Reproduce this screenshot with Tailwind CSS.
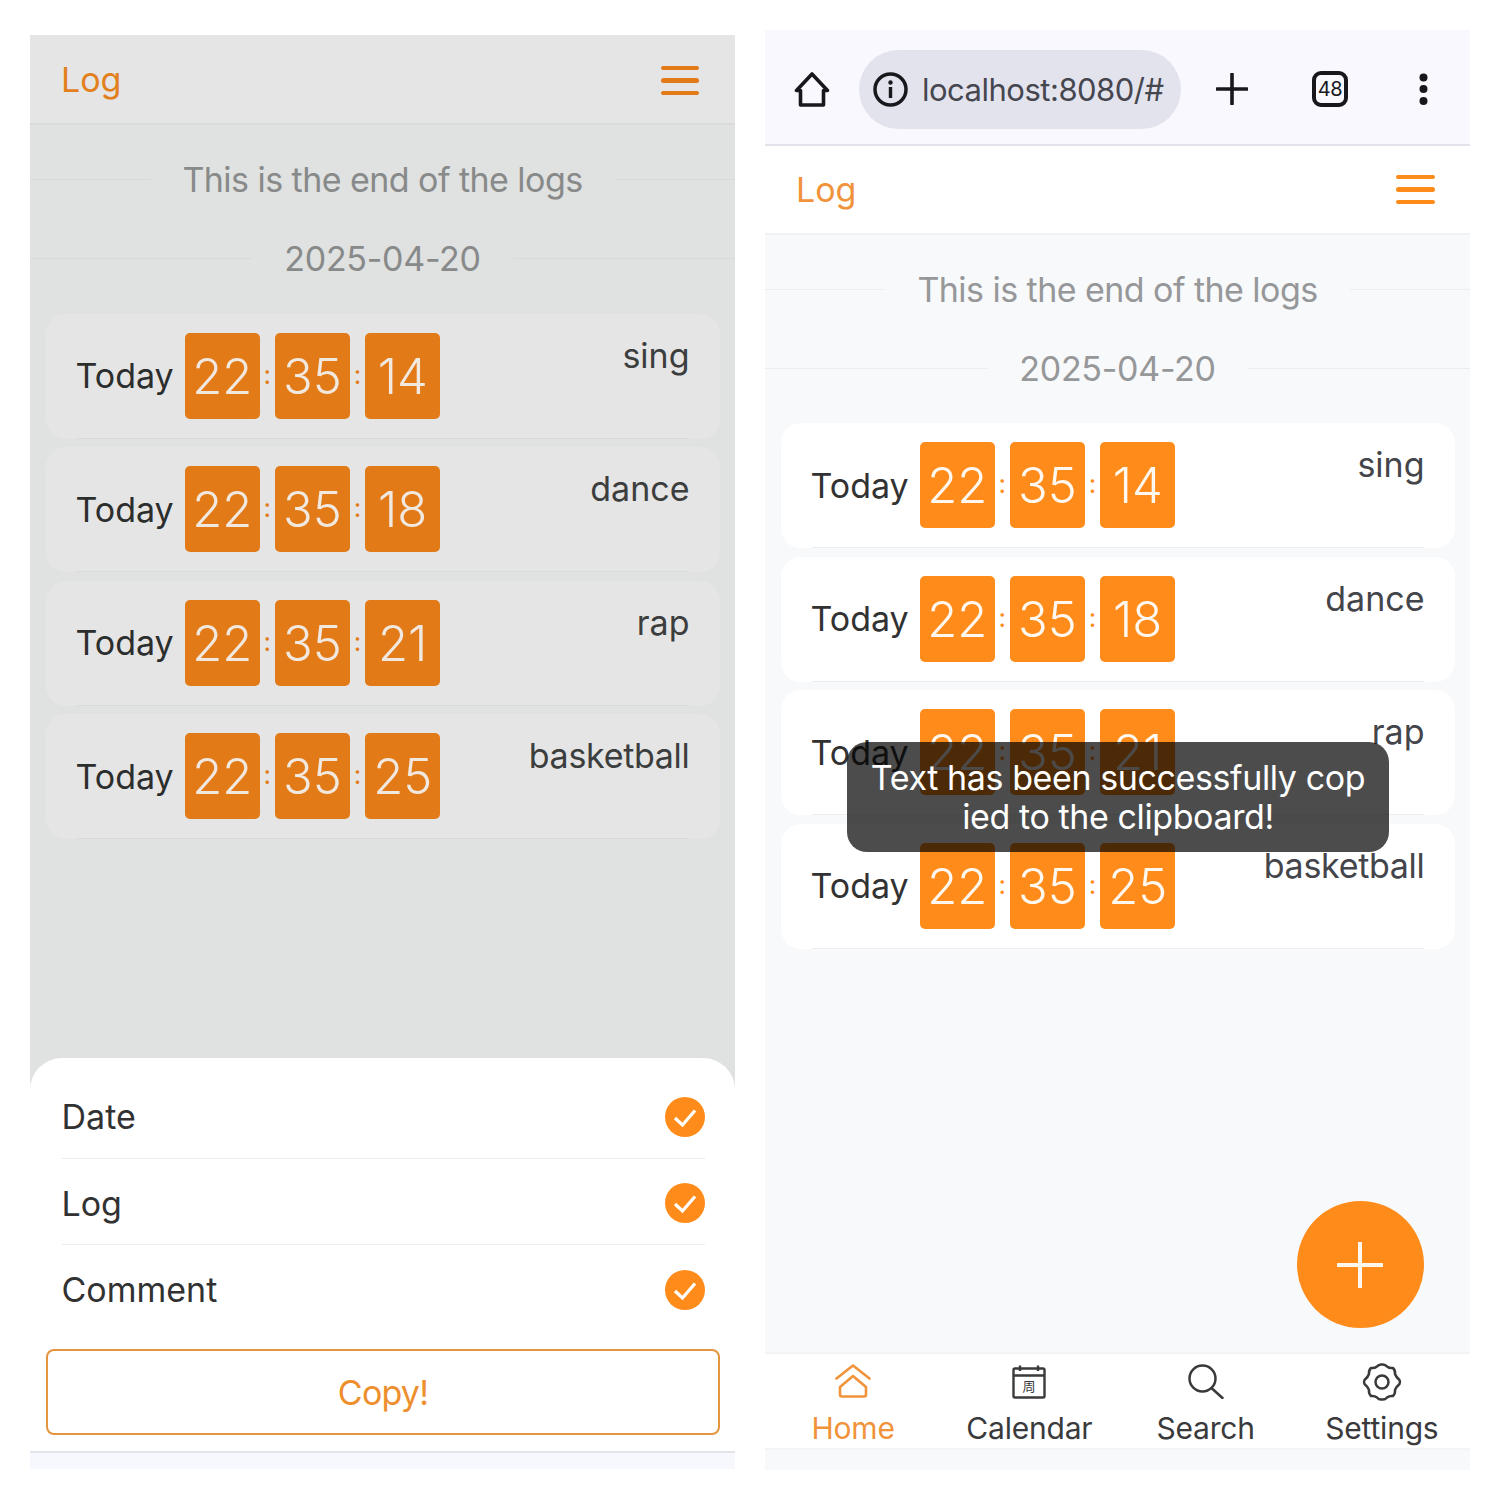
<!doctype html>
<html><head><meta charset="utf-8"><script src="https://cdn.jsdelivr.net/npm/@tailwindcss/browser@4"></script></head>
<body class="bg-white [font-family:Inter,sans-serif]">
<div class="flex w-[1500px] h-[1500px] pl-[30px] pt-[30px] gap-[30px] items-start">

<!-- LEFT PANEL -->
<div class="mt-[5px] w-[705px] h-[1434px] flex flex-col bg-[#e0e1e1]">
  <div class="h-[90px] shrink-0 bg-[#e5e5e5] border-b-2 border-[#d9dada] flex items-center justify-between pl-[31px] pr-[36px]">
    <span class="text-[34px] text-[#e2801e]">Log</span>
    <div class="flex flex-col gap-[8px] w-[38px] mt-[3px]"><div class="h-[4.5px] rounded-full bg-[#e27a17]"></div><div class="h-[4.5px] rounded-full bg-[#e27a17]"></div><div class="h-[4.5px] rounded-full bg-[#e27a17]"></div></div>
  </div>
  <div class="flex-1 pt-[15px]">
    <div class="h-[79px] flex items-center gap-[32px] text-[34px] tracking-[-0.55px] text-[#888a8a]"><div class="flex-1 h-px bg-[#d8d9d9]"></div><span>This is the end of the logs</span><div class="flex-1 h-px bg-[#d8d9d9]"></div></div>
    <div class="h-[79px] flex items-center gap-[32px] text-[34px] tracking-[-0.3px] text-[#888a8a]"><div class="flex-1 h-px bg-[#d8d9d9]"></div><span>2025-04-20</span><div class="flex-1 h-px bg-[#d8d9d9]"></div></div>
    <div class="mt-[15.5px] px-[15.5px] flex flex-col gap-[8.5px]">
      <div class="relative h-[125px] rounded-[20px] bg-[#e5e5e5] flex items-center pl-[30px] pr-[30px]"><span class="text-[34px] text-[#2c2d2d] mr-[11px] -mt-[1px]">Today</span><div class="w-[75px] h-[86px] -mt-[1px] rounded-[5px] bg-[#e27a17] text-[#f1e8df] text-[49px] font-[350] pt-[2px] flex items-center justify-center">22</div><span class="w-[15.25px] text-center text-[26px] text-[#e27a17] -mt-[4px]">:</span><div class="w-[75px] h-[86px] -mt-[1px] rounded-[5px] bg-[#e27a17] text-[#f1e8df] text-[49px] font-[350] pt-[2px] flex items-center justify-center">35</div><span class="w-[15.25px] text-center text-[26px] text-[#e27a17] -mt-[4px]">:</span><div class="w-[75px] h-[86px] -mt-[1px] rounded-[5px] bg-[#e27a17] text-[#f1e8df] text-[49px] font-[350] pt-[2px] flex items-center justify-center">14</div><span class="ml-auto self-start mt-[16px] text-[34px] text-[#3c3d3d]">sing</span><div class="absolute left-[31px] right-[31px] bottom-0 h-px bg-[#d8d9d9]"></div></div>
      <div class="relative h-[125px] rounded-[20px] bg-[#e5e5e5] flex items-center pl-[30px] pr-[30px]"><span class="text-[34px] text-[#2c2d2d] mr-[11px] -mt-[1px]">Today</span><div class="w-[75px] h-[86px] -mt-[1px] rounded-[5px] bg-[#e27a17] text-[#f1e8df] text-[49px] font-[350] pt-[2px] flex items-center justify-center">22</div><span class="w-[15.25px] text-center text-[26px] text-[#e27a17] -mt-[4px]">:</span><div class="w-[75px] h-[86px] -mt-[1px] rounded-[5px] bg-[#e27a17] text-[#f1e8df] text-[49px] font-[350] pt-[2px] flex items-center justify-center">35</div><span class="w-[15.25px] text-center text-[26px] text-[#e27a17] -mt-[4px]">:</span><div class="w-[75px] h-[86px] -mt-[1px] rounded-[5px] bg-[#e27a17] text-[#f1e8df] text-[49px] font-[350] pt-[2px] flex items-center justify-center">18</div><span class="ml-auto self-start mt-[16px] text-[34px] text-[#3c3d3d]">dance</span><div class="absolute left-[31px] right-[31px] bottom-0 h-px bg-[#d8d9d9]"></div></div>
      <div class="relative h-[125px] rounded-[20px] bg-[#e5e5e5] flex items-center pl-[30px] pr-[30px]"><span class="text-[34px] text-[#2c2d2d] mr-[11px] -mt-[1px]">Today</span><div class="w-[75px] h-[86px] -mt-[1px] rounded-[5px] bg-[#e27a17] text-[#f1e8df] text-[49px] font-[350] pt-[2px] flex items-center justify-center">22</div><span class="w-[15.25px] text-center text-[26px] text-[#e27a17] -mt-[4px]">:</span><div class="w-[75px] h-[86px] -mt-[1px] rounded-[5px] bg-[#e27a17] text-[#f1e8df] text-[49px] font-[350] pt-[2px] flex items-center justify-center">35</div><span class="w-[15.25px] text-center text-[26px] text-[#e27a17] -mt-[4px]">:</span><div class="w-[75px] h-[86px] -mt-[1px] rounded-[5px] bg-[#e27a17] text-[#f1e8df] text-[49px] font-[350] pt-[2px] flex items-center justify-center">21</div><span class="ml-auto self-start mt-[16px] text-[34px] text-[#3c3d3d]">rap</span><div class="absolute left-[31px] right-[31px] bottom-0 h-px bg-[#d8d9d9]"></div></div>
      <div class="relative h-[125px] rounded-[20px] bg-[#e5e5e5] flex items-center pl-[30px] pr-[30px]"><span class="text-[34px] text-[#2c2d2d] mr-[11px] -mt-[1px]">Today</span><div class="w-[75px] h-[86px] -mt-[1px] rounded-[5px] bg-[#e27a17] text-[#f1e8df] text-[49px] font-[350] pt-[2px] flex items-center justify-center">22</div><span class="w-[15.25px] text-center text-[26px] text-[#e27a17] -mt-[4px]">:</span><div class="w-[75px] h-[86px] -mt-[1px] rounded-[5px] bg-[#e27a17] text-[#f1e8df] text-[49px] font-[350] pt-[2px] flex items-center justify-center">35</div><span class="w-[15.25px] text-center text-[26px] text-[#e27a17] -mt-[4px]">:</span><div class="w-[75px] h-[86px] -mt-[1px] rounded-[5px] bg-[#e27a17] text-[#f1e8df] text-[49px] font-[350] pt-[2px] flex items-center justify-center">25</div><span class="ml-auto self-start mt-[16px] text-[34px] text-[#3c3d3d] tracking-[-0.3px]">basketball</span><div class="absolute left-[31px] right-[31px] bottom-0 h-px bg-[#d8d9d9]"></div></div>
    </div>
  </div>
  <!-- sheet -->
  <div class="shrink-0 h-[393px] bg-white rounded-t-[32px] pt-[15px] flex flex-col">
    <div class="ml-[31.5px] mr-[30px] h-[86px] pt-[2px] border-b border-[#ebedf0] flex items-center justify-between text-[34px] text-[#323233]"><span>Date</span><svg width="40" height="40" viewBox="0 0 40 40"><circle cx="20" cy="20" r="20" fill="#ff8c1a"/><path d="M10 21l7.500 7L30 13.500" fill="none" stroke="#fff" stroke-width="3.200"/></svg></div>
    <div class="ml-[31.5px] mr-[30px] h-[86px] pt-[3px] border-b border-[#ebedf0] flex items-center justify-between text-[34px] text-[#323233]"><span>Log</span><svg width="40" height="40" viewBox="0 0 40 40"><circle cx="20" cy="20" r="20" fill="#ff8c1a"/><path d="M10 21l7.500 7L30 13.500" fill="none" stroke="#fff" stroke-width="3.200"/></svg></div>
    <div class="ml-[31.5px] mr-[30px] h-[86px] pt-[3px] flex items-center justify-between text-[34px] text-[#323233]"><span>Comment</span><svg width="40" height="40" viewBox="0 0 40 40"><circle cx="20" cy="20" r="20" fill="#ff8c1a"/><path d="M10 21l7.500 7L30 13.500" fill="none" stroke="#fff" stroke-width="3.200"/></svg></div>
    <div class="ml-[16px] mr-[15px] mt-[18px] h-[86px] border-2 border-[#e5943f] rounded-[8px] flex items-center justify-center text-[34px] tracking-[-0.8px] text-[#ee8f2e]">Copy!</div>
  </div>
  <div class="shrink-0 h-[18px] bg-[#f7f8fd] border-t-2 border-[#e3e4e9]"></div>
</div>

<!-- RIGHT PANEL -->
<div class="relative w-[705px] h-[1440px] flex flex-col bg-[#f8f9fb]">
  <div class="h-[116px] shrink-0 bg-[#f8f8fe] border-b-2 border-[#e3e3ec] flex items-start">
    <svg class="ml-[29px] mt-[41px]" width="36" height="37" viewBox="0 0 36 37"><path d="M18 3L2.500 19.500H6.500V34H29.500V19.500H33.500Z" fill="none" stroke="#17171c" stroke-width="3.600" stroke-linejoin="round"/></svg>
    <div class="ml-[29px] mt-[20px] w-[322px] h-[79px] rounded-full bg-[#e3e3ee] flex items-center pl-[14px]">
      <svg width="35" height="35" viewBox="0 0 35 35"><circle cx="17.500" cy="17.500" r="15.500" fill="none" stroke="#17171c" stroke-width="3.500"/><circle cx="17.500" cy="10.500" r="2.200" fill="#17171c"/><rect x="15.800" y="15" width="3.400" height="11" fill="#17171c"/></svg>
      <span class="ml-[14px] mt-[1px] text-[31px] tracking-[-0.5px] text-[#46464f] whitespace-nowrap">localhost:8080/#</span>
    </div>
    <svg class="ml-[35px] mt-[43px]" width="32" height="32" viewBox="0 0 32 32"><path d="M16 1V31M1 16H31" stroke="#17171c" stroke-width="3.600" stroke-linecap="round"/></svg>
    <div class="ml-[64px] mt-[41px] w-[36px] h-[36px] rounded-[9px] border-[4px] border-[#17171c] flex items-center justify-center text-[20px] text-[#17171c] tracking-[-0.5px]">48</div>
    <svg class="ml-[71px] mt-[43px]" width="9" height="33" viewBox="0 0 9 33"><circle cx="4.500" cy="4.500" r="4" fill="#17171c"/><circle cx="4.500" cy="16" r="4" fill="#17171c"/><circle cx="4.500" cy="28" r="4" fill="#17171c"/></svg>
  </div>
  <div class="h-[89px] shrink-0 bg-white border-b-2 border-[#f0f1f4] flex items-center justify-between pl-[31px] pr-[35px]">
    <span class="text-[34px] text-[#f0933a]">Log</span>
    <div class="flex flex-col gap-[8px] w-[39px]"><div class="h-[4.5px] rounded-full bg-[#ff8c1a]"></div><div class="h-[4.5px] rounded-full bg-[#ff8c1a]"></div><div class="h-[4.5px] rounded-full bg-[#ff8c1a]"></div></div>
  </div>
  <div class="flex-1 pt-[15px]">
    <div class="h-[79px] flex items-center gap-[32px] text-[34px] tracking-[-0.55px] text-[#969799]"><div class="flex-1 h-px bg-[#ebedf0]"></div><span>This is the end of the logs</span><div class="flex-1 h-px bg-[#ebedf0]"></div></div>
    <div class="h-[79px] flex items-center gap-[32px] text-[34px] tracking-[-0.3px] text-[#969799]"><div class="flex-1 h-px bg-[#ebedf0]"></div><span>2025-04-20</span><div class="flex-1 h-px bg-[#ebedf0]"></div></div>
    <div class="mt-[15px] px-[15.5px] flex flex-col gap-[8.5px]">
      <div class="relative h-[125px] rounded-[20px] bg-white flex items-center pl-[30px] pr-[30px]"><span class="text-[34px] text-[#323233] mr-[11px] -mt-[1px]">Today</span><div class="w-[75px] h-[86px] -mt-[1px] rounded-[5px] bg-[#ff8c1a] text-[#fff8f0] text-[49px] font-[350] pt-[2px] flex items-center justify-center">22</div><span class="w-[15.25px] text-center text-[26px] text-[#ff8c1a] -mt-[4px]">:</span><div class="w-[75px] h-[86px] -mt-[1px] rounded-[5px] bg-[#ff8c1a] text-[#fff8f0] text-[49px] font-[350] pt-[2px] flex items-center justify-center">35</div><span class="w-[15.25px] text-center text-[26px] text-[#ff8c1a] -mt-[4px]">:</span><div class="w-[75px] h-[86px] -mt-[1px] rounded-[5px] bg-[#ff8c1a] text-[#fff8f0] text-[49px] font-[350] pt-[2px] flex items-center justify-center">14</div><span class="ml-auto self-start mt-[16px] text-[34px] text-[#44454a]">sing</span><div class="absolute left-[31px] right-[31px] bottom-0 h-px bg-[#ebedf0]"></div></div>
      <div class="relative h-[125px] rounded-[20px] bg-white flex items-center pl-[30px] pr-[30px]"><span class="text-[34px] text-[#323233] mr-[11px] -mt-[1px]">Today</span><div class="w-[75px] h-[86px] -mt-[1px] rounded-[5px] bg-[#ff8c1a] text-[#fff8f0] text-[49px] font-[350] pt-[2px] flex items-center justify-center">22</div><span class="w-[15.25px] text-center text-[26px] text-[#ff8c1a] -mt-[4px]">:</span><div class="w-[75px] h-[86px] -mt-[1px] rounded-[5px] bg-[#ff8c1a] text-[#fff8f0] text-[49px] font-[350] pt-[2px] flex items-center justify-center">35</div><span class="w-[15.25px] text-center text-[26px] text-[#ff8c1a] -mt-[4px]">:</span><div class="w-[75px] h-[86px] -mt-[1px] rounded-[5px] bg-[#ff8c1a] text-[#fff8f0] text-[49px] font-[350] pt-[2px] flex items-center justify-center">18</div><span class="ml-auto self-start mt-[16px] text-[34px] text-[#44454a]">dance</span><div class="absolute left-[31px] right-[31px] bottom-0 h-px bg-[#ebedf0]"></div></div>
      <div class="relative h-[125px] rounded-[20px] bg-white flex items-center pl-[30px] pr-[30px]"><span class="text-[34px] text-[#323233] mr-[11px] -mt-[1px]">Today</span><div class="w-[75px] h-[86px] -mt-[1px] rounded-[5px] bg-[#ff8c1a] text-[#fff8f0] text-[49px] font-[350] pt-[2px] flex items-center justify-center">22</div><span class="w-[15.25px] text-center text-[26px] text-[#ff8c1a] -mt-[4px]">:</span><div class="w-[75px] h-[86px] -mt-[1px] rounded-[5px] bg-[#ff8c1a] text-[#fff8f0] text-[49px] font-[350] pt-[2px] flex items-center justify-center">35</div><span class="w-[15.25px] text-center text-[26px] text-[#ff8c1a] -mt-[4px]">:</span><div class="w-[75px] h-[86px] -mt-[1px] rounded-[5px] bg-[#ff8c1a] text-[#fff8f0] text-[49px] font-[350] pt-[2px] flex items-center justify-center">21</div><span class="ml-auto self-start mt-[16px] text-[34px] text-[#44454a]">rap</span><div class="absolute left-[31px] right-[31px] bottom-0 h-px bg-[#ebedf0]"></div></div>
      <div class="relative h-[125px] rounded-[20px] bg-white flex items-center pl-[30px] pr-[30px]"><span class="text-[34px] text-[#323233] mr-[11px] -mt-[1px]">Today</span><div class="w-[75px] h-[86px] -mt-[1px] rounded-[5px] bg-[#ff8c1a] text-[#fff8f0] text-[49px] font-[350] pt-[2px] flex items-center justify-center">22</div><span class="w-[15.25px] text-center text-[26px] text-[#ff8c1a] -mt-[4px]">:</span><div class="w-[75px] h-[86px] -mt-[1px] rounded-[5px] bg-[#ff8c1a] text-[#fff8f0] text-[49px] font-[350] pt-[2px] flex items-center justify-center">35</div><span class="w-[15.25px] text-center text-[26px] text-[#ff8c1a] -mt-[4px]">:</span><div class="w-[75px] h-[86px] -mt-[1px] rounded-[5px] bg-[#ff8c1a] text-[#fff8f0] text-[49px] font-[350] pt-[2px] flex items-center justify-center">25</div><span class="ml-auto self-start mt-[16px] text-[34px] text-[#44454a] tracking-[-0.3px]">basketball</span><div class="absolute left-[31px] right-[31px] bottom-0 h-px bg-[#ebedf0]"></div></div>
    </div>
  </div>
  <div class="shrink-0 h-[98px] bg-white border-y-2 border-[#f3f4f6] grid grid-cols-4 text-[30px] tracking-[-0.2px] text-[#3a3a3c]">
    <div class="flex flex-col items-center text-[#f0933a]"><svg class="mt-[10px]" width="36" height="34" viewBox="0 0 36 34" fill="none" stroke="#f0933a" stroke-width="2.600" stroke-linejoin="round" stroke-linecap="round"><path d="M1.500 14.500L18 1.500L34.500 14.500"/><path d="M18 12L5 23V30.500Q5 32.500 7 32.500H29Q31 32.500 31 30.500V23Z"/></svg><span class="mt-[12px] leading-[36px]">Home</span></div>
    <div class="flex flex-col items-center"><svg class="mt-[11px]" width="34" height="34" viewBox="0 0 34 34" fill="none" stroke="#3a3a3c" stroke-width="2.400"><rect x="1.500" y="3.500" width="31" height="29" rx="1.500"/><path d="M1.500 10.500H32.500M8 .5V6M26 .5V6"/><text x="17" y="26" text-anchor="middle" font-size="13" font-family="Noto Sans CJK SC" fill="#3a3a3c" stroke="none">周</text></svg><span class="mt-[11px] leading-[36px]">Calendar</span></div>
    <div class="flex flex-col items-center"><svg class="mt-[10px]" width="36" height="35" viewBox="0 0 36 35" fill="none" stroke="#3a3a3c" stroke-width="2.500" stroke-linecap="round"><circle cx="14.500" cy="14.500" r="13"/><path d="M24 24.500L34.500 34"/></svg><span class="mt-[11px] leading-[36px]">Search</span></div>
    <div class="flex flex-col items-center"><svg class="mt-[8px]" width="40" height="40" viewBox="0 0 40 40" fill="none" stroke="#3a3a3c" stroke-width="2.500" stroke-linejoin="round"><path d="M20 2.500Q23 2 25 4.500Q27.500 6.500 31 6Q33.500 8.500 33 12Q34 15 37.500 18Q38.500 20 37.500 22Q34 25 33 28Q33.500 31.500 31 34Q27.500 33.500 25 35.500Q23 38 20 37.500Q17 38 15 35.500Q12.500 33.500 9 34Q6.500 31.500 7 28Q6 25 2.500 22Q1.500 20 2.500 18Q6 15 7 12Q6.500 8.500 9 6Q12.500 6.500 15 4.500Q17 2 20 2.500Z"/><circle cx="20" cy="20" r="6.500"/></svg><span class="mt-[8px] leading-[36px]">Settings</span></div>
  </div>
  <div class="shrink-0 h-[20px]"></div>
  <!-- toast -->
  <div class="absolute left-[82px] top-[712px] w-[542px] h-[110px] rounded-[20px] bg-black/70 flex items-center justify-center text-center text-[34px] tracking-[-0.4px] leading-[39px] text-white whitespace-nowrap">Text has been successfully cop<br>ied to the clipboard!</div>
  <!-- fab -->
  <div class="absolute left-[531.5px] top-[1171px] w-[127px] h-[127px] rounded-full bg-[#ff8c1a] flex items-center justify-center"><svg width="46" height="46" viewBox="0 0 46 46"><path d="M23 1V45M1 23H45" stroke="#fff8f0" stroke-width="4" stroke-linecap="round"/></svg></div>
</div>
</div>
</body></html>
